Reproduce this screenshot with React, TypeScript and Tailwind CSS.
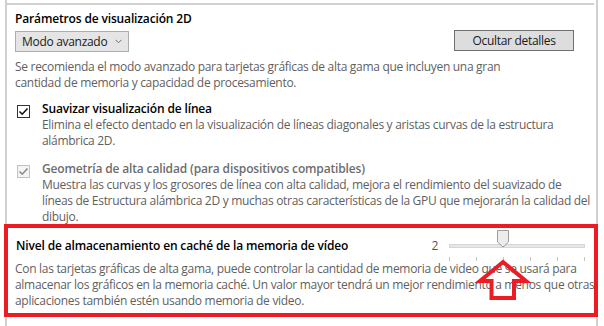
import React from "react";

const Check = ({ color }: { color: string }) => (
  <svg width="11" height="11" viewBox="0 0 11 11" className="block">
    <polyline points="1.5,5.5 4.2,8.2 9.5,2.5" fill="none" stroke={color} strokeWidth="1.6" />
  </svg>
);

export default function App() {
  const ticks = [0, 1, 2, 3, 4, 5];
  return (
    <div className="w-[604px] h-[326px] bg-white overflow-hidden relative font-['Open_Sans',sans-serif] text-[12px] leading-[16px] tracking-[-0.3px] text-[#5f5f5f]">
      <div className="ml-[5px] w-[593px] h-full border-x-2 border-[#d0d0d0] flex flex-col">
        <div className="h-[2px] mt-[3px] bg-[#d0d0d0] mr-[2px] shrink-0" />
        <div className="pl-[8px]">
          <div className="mt-[6px] font-semibold tracking-[-0.15px] text-black whitespace-nowrap">Parámetros de visualización 2D</div>
          <div className="mt-[3px] flex justify-between items-start mr-[22px]">
            <div className="mt-[1px] h-[21px] w-[114px] border border-[#adadad] bg-[#e5e5e5] flex items-center pl-[6px] pr-[6px] justify-between text-[#1a1a1a] text-[12px]">
              <span className="whitespace-nowrap">Modo avanzado</span>
              <svg width="7" height="5" viewBox="0 0 7 5">
                <polyline points="0.5,0.8 3.5,3.8 6.5,0.8" fill="none" stroke="#707070" strokeWidth="1" />
              </svg>
            </div>
            <div className="h-[21px] w-[120px] border border-[#707070] bg-[#dddddd] flex items-center justify-center text-[#1a1a1a] text-[12px] whitespace-nowrap">
              Ocultar detalles
            </div>
          </div>
          <div className="mt-[7px] whitespace-nowrap">
            <div>Se recomienda el modo avanzado para tarjetas gráficas de alta gama que incluyen una gran</div>
            <div>cantidad de memoria y capacidad de procesamiento.</div>
          </div>

          <div className="mt-[10px] flex items-start">
            <div className="ml-[2px] mt-[4px] w-[13px] h-[13px] border border-[#333333] bg-white flex items-center justify-center shrink-0">
              <Check color="#111111" />
            </div>
            <div className="ml-[12px] whitespace-nowrap">
              <div className="font-semibold tracking-[-0.15px] text-black">Suavizar visualización de línea</div>
              <div>Elimina el efecto dentado en la visualización de líneas diagonales y aristas curvas de la estructura</div>
              <div>alámbrica 2D.</div>
            </div>
          </div>

          <div className="mt-[12px] flex items-start">
            <div className="ml-[2px] mt-[4px] w-[13px] h-[13px] border border-[#c2c2c2] bg-[#f4f4f4] flex items-center justify-center shrink-0">
              <Check color="#8a8a8a" />
            </div>
            <div className="ml-[12px] whitespace-nowrap">
              <div className="font-semibold tracking-[-0.15px] text-[#6d6d6d]">Geometría de alta calidad (para dispositivos compatibles)</div>
              <div>Muestra las curvas y los grosores de línea con alta calidad, mejora el rendimiento del suavizado de</div>
              <div>líneas de Estructura alámbrica 2D y muchas otras características de la GPU que mejorarán la calidad del</div>
              <div>dibujo.</div>
            </div>
          </div>

          <div className="mt-[13px] flex items-center pr-[11px]">
            <div className="ml-[1px] font-semibold tracking-[-0.15px] text-black whitespace-nowrap flex-1">Nivel de almacenamiento en caché de la memoria de vídeo</div>
            <div className="text-[#555555] mr-[11px]">2</div>
            <div className="relative w-[136px] h-[16px]">
              <div className="absolute left-0 right-0 top-[6px] h-[4px] bg-[#e7e7e7] border border-[#d6d6d6]" />
              {ticks.map((t) => (
                <div
                  key={t}
                  className="absolute w-[1px] h-[4px] bg-[#c4c4c4] top-[19px]"
                  style={{ left: `${t * 27}px` }}
                />
              ))}
              <svg className="absolute left-[48px] top-[-8px]" width="12" height="18" viewBox="0 0 12 18">
                <polygon points="0.5,0.5 11.5,0.5 11.5,12 6,17 0.5,12" fill="#ececec" stroke="#9c9c9c" strokeWidth="1" />
              </svg>
            </div>
          </div>
          <div className="mt-[7px] whitespace-nowrap">
            <div>Con las tarjetas gráficas de alta gama, puede controlar la cantidad de memoria de video que se usará para</div>
            <div>almacenar los gráficos en la memoria caché. Un valor mayor tendrá un mejor rendimiento a menos que otras</div>
            <div>aplicaciones también estén usando memoria de video.</div>
          </div>
        </div>
      </div>

      <div className="absolute left-[4px] top-[224px] w-[594px] h-[93px] border-[4px] border-[#ed1c24]" />
      <svg className="absolute left-0 top-0" width="604" height="326" viewBox="0 0 604 326">
        <polygon
          points="503,262 526,281 514,281 514,298 491.5,298 491.5,281 480,281"
          fill="none"
          stroke="#ed1c24"
          strokeWidth="4"
          strokeLinejoin="miter"
        />
      </svg>
    </div>
  );
}
